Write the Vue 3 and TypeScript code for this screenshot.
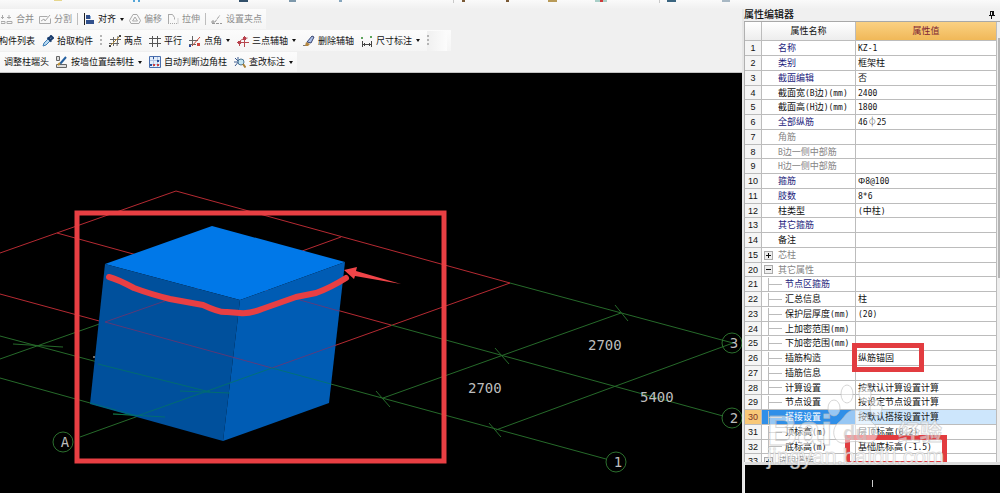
<script setup lang="ts">
interface Tool {
  label?: string
  icon?: string
  caret?: boolean
  disabled?: boolean
  sep?: 'line' | 'grip'
}
interface Row {
  no: number
  name: string
  value?: string
  tone?: 'blue' | 'grey'
  child?: boolean
  toggle?: '+' | '-'
  selected?: boolean
}

const bars: Tool[][] = [
  [
    { label: '合并', icon: 'merge', disabled: true },
    { label: '分割', icon: 'split', disabled: true },
    { sep: 'line' },
    { label: '对齐', icon: 'align', caret: true },
    { label: '偏移', icon: 'offset', disabled: true },
    { label: '拉伸', icon: 'stretch', disabled: true },
    { sep: 'line' },
    { label: '设置夹点', icon: 'grip', disabled: true },
  ],
  [
    { label: '构件列表' },
    { label: '拾取构件', icon: 'pick' },
    { sep: 'grip' },
    { label: '两点', icon: 'two' },
    { label: '平行', icon: 'parallel' },
    { label: '点角', icon: 'angle', caret: true },
    { label: '三点辅轴', icon: 'three', caret: true },
    { label: '删除辅轴', icon: 'erase' },
    { label: '尺寸标注', icon: 'dim', caret: true },
  ],
  [
    { label: '调整柱端头' },
    { label: '按墙位置绘制柱', icon: 'wall', caret: true },
    { label: '自动判断边角柱', icon: 'auto' },
    { label: '查改标注', icon: 'edit', caret: true },
  ],
]

const rows: Row[] = [
  { no: 1, name: '名称', value: 'KZ-1', tone: 'blue' },
  { no: 2, name: '类别', value: '框架柱', tone: 'blue' },
  { no: 3, name: '截面编辑', value: '否', tone: 'blue' },
  { no: 4, name: '截面宽(B边)(mm)', value: '2400' },
  { no: 5, name: '截面高(H边)(mm)', value: '1800' },
  { no: 6, name: '全部纵筋', value: '46⏀25', tone: 'blue' },
  { no: 7, name: '角筋', tone: 'grey' },
  { no: 8, name: 'B边一侧中部筋', tone: 'grey' },
  { no: 9, name: 'H边一侧中部筋', tone: 'grey' },
  { no: 10, name: '箍筋', value: 'Φ8@100', tone: 'blue' },
  { no: 11, name: '肢数', value: '8*6', tone: 'blue' },
  { no: 12, name: '柱类型', value: '(中柱)' },
  { no: 13, name: '其它箍筋', tone: 'blue' },
  { no: 14, name: '备注' },
  { no: 15, name: '芯柱', tone: 'grey', toggle: '+' },
  { no: 20, name: '其它属性', tone: 'grey', toggle: '-' },
  { no: 21, name: '节点区箍筋', tone: 'blue', child: true },
  { no: 22, name: '汇总信息', value: '柱', child: true },
  { no: 23, name: '保护层厚度(mm)', value: '(20)', child: true },
  { no: 24, name: '上加密范围(mm)', child: true },
  { no: 25, name: '下加密范围(mm)', child: true },
  { no: 26, name: '插筋构造', value: '纵筋锚固', child: true },
  { no: 27, name: '插筋信息', child: true },
  { no: 28, name: '计算设置', value: '按默认计算设置计算', child: true },
  { no: 29, name: '节点设置', value: '按设定节点设置计算', child: true },
  { no: 30, name: '搭接设置', value: '按默认搭接设置计算', child: true, selected: true },
  { no: 31, name: '顶标高(m)', value: '层顶标高(0.2)', child: true },
  { no: 32, name: '底标高(m)', value: '基础底标高(-1.5)', child: true },
  { no: 33, name: '锚固搭接', tone: 'grey', toggle: '+' },
]

// Splits a label into Latin and CJK runs, which are set at different sizes.
const runs = (s = ''): string[] => s.match(/[\x20-\x7e]+|[^\x20-\x7e]+/g) ?? []
const isLatin = (s: string): boolean => /^[\x20-\x7e]/.test(s)

const gridRed = [
  'M176 191L0 253', 'M176 191L510 283', 'M57 233L391 325', 'M0 294L272 368',
  'M510 283L272 368', 'M341 237L105 322',
]
const gridGreen = [
  'M510 283L733 343', 'M391 325L723 416', 'M272 368L606 459', 'M621 313L383 398',
  'M733 343L496 430', 'M272 368L80 437', 'M105 322L0 359', 'M0 336L210 392',
  'M0 378L137 416', 'M13 344L63 347', 'M180 391L230 393', 'M113 414L165 417',
  'M376 391L390 407', 'M495 348L509 364', 'M615 305L628 321', 'M489 423L501 437',
]
const axes = [
  { t: 'A', x: 63, y: 442 }, { t: '3', x: 732, y: 343 },
  { t: '2', x: 732, y: 418 }, { t: '1', x: 616, y: 462 },
]
const sizes = [
  { t: '2700', x: 588, y: 350 }, { t: '2700', x: 468, y: 393 }, { t: '5400', x: 640, y: 402 },
]
</script>

<template>
  <div class="app">
    <div class="cut-strip">
      <svg viewBox="0 0 1000 8" preserveAspectRatio="xMinYMin slice" aria-hidden="true">
        <path d="M54 0h8v1h-8z" fill="#e6d68c" />
        <path d="M133 0h2v2h-2zM138 0h2v2h-2z" fill="#55a6d8" />
        <path d="M239 0h9v2h-9z" fill="#32506a" />
        <path d="M289 0h7v2h-7z" fill="#7d98ab" />
        <path d="M339 0h3v2h-3z" fill="#86a6bd" />
        <path d="M453 0h1v3h-1zM659 0h1v3h-1z" fill="#c9c9c9" />
        <path d="M462 0h3v2h-3zM506 0h3v2h-3z" fill="#7a5a36" />
        <path d="M548 0h9v2h-9z" fill="#b89a58" />
        <path d="M595 0h12v2h-12z" fill="#a9cfc8" /><path d="M600 0h3v2h-3z" fill="#cc3b3b" />
        <path d="M667 0h9v2h-9z" fill="#3b6580" />
        <path d="M722 0h8v2h-8z" fill="#a8b8c4" />
      </svg>
    </div>
    <div class="main">
      <section class="work">
        <div class="bars">
          <div v-for="(bar, i) in bars" :key="i" class="bar" :class="'bar-' + i">
            <template v-for="(t, j) in bar" :key="j">
              <span v-if="t.sep" :class="t.sep"></span>
              <button v-else type="button" class="tool" :disabled="t.disabled">
                <svg v-if="t.icon" class="ico" viewBox="0 0 12 12" fill="none" aria-hidden="true">
                  <g v-if="t.icon === 'merge'" stroke="#aaa"><path d="M0 4.500h3M1.500 2v4M6 4.500h4M8 2v4M0 8.500h4v2h-4zM6 8.500h5v2h-5z" /></g>
                  <g v-else-if="t.icon === 'split'" stroke="#aaa"><path d="M.5 3.500h8M.5 3.500v7h11v-5M2 8l3-2 1 2 5-6" /></g>
                  <g v-else-if="t.icon === 'align'"><path d="M1.500 0v12" stroke="#222" /><path d="M3 2h4v4h-4zM3 7h8v4h-8z" fill="#31508c" /><path d="M7.500 3v3" stroke="#8fb0dc" /></g>
                  <g v-else-if="t.icon === 'offset'" stroke="#aaa"><path d="M4 1.500h4l3.500 6-1.500 3h-8l-1.500-3z" /><path d="M6 4l2.500 4h-5z" /></g>
                  <g v-else-if="t.icon === 'stretch'" stroke="#aaa"><path d="M1.500 1v10M1.500 1.500h4l2 3v2" /><path d="M3 10.500h8v-5" stroke-dasharray="1 1" /></g>
                  <g v-else-if="t.icon === 'grip'" stroke="#999"><path d="M4 9l5-7M1 10.500h10" stroke-dasharray="3 1" /><path d="M1 8h2v2h-2z" /></g>
                  <g v-else-if="t.icon === 'pick'"><path d="M1 11l1-3 4-4 2 2-4 4z" fill="#b7d9f2" stroke="#3c7cb4" /><path d="M5.500 2.500l4 4M7 3.500l2-2.500 2 2-2.500 2z" stroke="#173a6c" stroke-width="2" /></g>
                  <g v-else-if="t.icon === 'two'"><path d="M1 4.500h11M0 8.500h10M4.500 2v9M9 1l-1 10" stroke="#666" /><path d="M1 11l9-9" stroke="#b58b33" /><path d="M10 0h2v2h-2zM0 10h2v2h-2z" fill="#444" /></g>
                  <g v-else-if="t.icon === 'parallel'"><path d="M0 3.500h12M0 8.500h12M3.500 1v11M8.500 1v11" stroke="#555" /></g>
                  <g v-else-if="t.icon === 'angle'"><path d="M0 5.500h9M0 9.500h7M3.500 1v10" stroke="#666" /><path d="M3 11l8-9" stroke="#c5483a" /><path d="M8 8h3v3h-3z" fill="#cf4540" /><path d="M0 10h2v2h-2z" fill="#2b489c" /></g>
                  <g v-else-if="t.icon === 'three'"><path d="M2.500 11v-3q0-4 8-5M0 7.500h12M7.500 1v11" stroke="#b74850" /><path d="M1 6h3v3h-3zM6 2h3v3h-3z" fill="#b8404c" /></g>
                  <g v-else-if="t.icon === 'erase'"><path d="M0 10.500h4" stroke="#777" /><path d="M4 7l5-6 2 1-3 6z" fill="#a9bde6" stroke="#37446f" /><path d="M3 7l4 2-2 2h-3z" fill="#b28540" /></g>
                  <g v-else-if="t.icon === 'dim'"><path d="M1.500 6v6M10.500 6v6M1.500 9.500h9" stroke="#444" /><path d="M3 8h1v3h-1zM8 8h1v3h-1z" fill="#444" /><path d="M0 2h2v2h-2zM9 1h2v2h-2z" fill="#5da45c" /></g>
                  <g v-else-if="t.icon === 'wall'"><path d="M.5.5h3v4h-3zM.5 8.500h10v3h-10z" fill="#ddd" stroke="#666" /><path d="M4 8l6-7" stroke="#235fa0" stroke-width="2" /><path d="M2 9l2-2" stroke="#bf9030" stroke-width="2" /></g>
                  <g v-else-if="t.icon === 'auto'"><path d="M.5.5h11v11h-11z" fill="#e3edf9" stroke="#4a6fae" /><path d="M4.500 1v10M8.500 1v10M1 4.500h10M1 8.500h10" stroke="#b3c5e2" /><path d="M4 1h1v2h-1zM1 8h2v2h-2zM8 4h2v2h-2z" fill="#274e9a" /><path d="M4 8h2v2h-2zM8 8h2v2h-2z" fill="#cc3d3d" /></g>
                  <g v-else><path d="M1 2l3 3M1 10l5-6M4 1v4M0 6h4" stroke="#3d5c91" /><circle cx="7" cy="6" r="3" fill="#c5e5f1" stroke="#4b7695" /><path d="M9 8l2.500 3.500" stroke="#ab8235" stroke-width="2" /></g>
                </svg>
                <span>{{ t.label }}</span>
                <i v-if="t.caret" class="caret"></i>
              </button>
            </template>
            <span v-if="i === 1" class="stub"><span class="grip"></span></span>
          </div>
        </div>
        <svg class="scene" viewBox="0 73 742 420" preserveAspectRatio="xMinYMin meet" role="img" aria-label="三维视图">
          <g fill="none" stroke-width="1">
            <path :d="gridRed.join('')" stroke="#b52a32" />
            <path :d="gridGreen.join('')" stroke="#266a2a" />
          </g>
          <path d="M212 226L345 262L240 300L105 264z" fill="#0078e8" />
          <path d="M105 264L240 300L223 441L90 404z" fill="#00509c" />
          <path d="M240 300L345 262L329 403L223 441z" fill="#005cb4" />
          <g fill="none" stroke-width="1" opacity=".65">
            <path d="M105 322L165 301M105 322L272 368L336 345M300 300L339 311" stroke="#8b2c63" />
            <path d="M98 364L210 392M272 368L137 416M272 368L331 384M90 403L137 416M180 391L230 393M113 414L165 417" stroke="#007c5c" />
          </g>
          <path d="M94 356v2" stroke="#ddd" />
          <g fill="none" stroke="#2c702e">
            <circle v-for="a in axes" :key="a.t" :cx="a.x" :cy="a.y" r="10" />
          </g>
          <g class="cad">
            <text v-for="a in axes" :key="a.t" :x="a.x + 2" :y="a.y + 5" text-anchor="middle">{{ a.t }}</text>
            <text v-for="(s, i) in sizes" :key="i" :x="s.x" :y="s.y">{{ s.t }}</text>
          </g>
          <rect x="77" y="213" width="367" height="248" fill="none" stroke="#e83f43" stroke-width="5" />
          <path d="M109 277Q117 279 134 288Q150 294 170 299L203 305Q220 313 227 312L240 313Q250 314 262 309L296 297L316 293Q330 288 346 278" fill="none" stroke="#e83f43" stroke-width="6" stroke-linecap="round" stroke-linejoin="round" />
          <path d="M344 270L357 267L356 271L401 284L355 276L354 279z" fill="#f04448" />
        </svg>
      </section>

      <aside class="panel">
        <header class="title">
          <span>属性编辑器</span>
          <button type="button" class="pin" aria-label="固定">
            <svg viewBox="0 0 8 8" aria-hidden="true"><path d="M2 0h4v4h1v1h-3v3h-1v-3h-2v-1h1zM3 1v3h1v-3z" fill="#111" fill-rule="evenodd" /></svg>
          </button>
        </header>
        <div class="sheet">
          <table>
            <colgroup><col class="c-no" /><col class="c-name" /><col /></colgroup>
            <thead>
              <tr><th></th><th>属性名称</th><th class="hot">属性值</th></tr>
            </thead>
            <tbody>
              <tr v-for="r in rows" :key="r.no" :class="{ selected: r.selected }">
                <td class="no">{{ r.no }}</td>
                <td class="name" :class="[r.tone, { child: r.child }]">
                  <div class="cell">
                    <button v-if="r.toggle" type="button" class="toggle" :class="{ open: r.toggle === '-' }" :aria-label="r.name"></button>
                    <span v-else-if="r.child" class="branch"></span>
                    <span class="txt"><span v-for="(s, k) in runs(r.name)" :key="k" :class="{ latin: isLatin(s) }">{{ s }}</span></span>
                  </div>
                </td>
                <td class="value">
                  <div class="cell"><span><span v-for="(s, k) in runs(r.value)" :key="k" :class="{ latin: isLatin(s) }">{{ s }}</span></span></div>
                </td>
              </tr>
            </tbody>
          </table>
          <div class="mark mark-a"></div>
          <div class="mark mark-b"></div>
        </div>
        <div class="below"><span></span></div>
        <svg class="watermark" viewBox="0 0 190 92" aria-hidden="true">
          <g fill="#fff" fill-opacity=".5" stroke="#bbb" stroke-opacity=".6" stroke-width="1">
            <ellipse cx="70" cy="31" rx="6" ry="8" />
            <ellipse cx="83" cy="17" rx="6" ry="9" />
            <ellipse cx="101" cy="17" rx="6" ry="9" />
            <ellipse cx="112" cy="31" rx="6" ry="8" />
            <path d="M91 33C82 33 80 42 74 46C66 53 70 67 80 66C88 64 94 64 102 66C114 67 117 53 109 46C102 41 100 33 91 33z" />
            <text x="3" y="68" class="wm-big">Bai</text>
            <text x="134" y="63" class="wm-cjk">经验</text>
          </g>
          <text x="79" y="63" class="wm-du">du</text>
          <text x="3" y="87" class="wm-url">jingyan.baidu.com</text>
        </svg>
      </aside>
    </div>
  </div>
</template>

<style>
body {
  margin: 0;
}
</style>

<style scoped>
.app {
  display: flex;
  flex-direction: column;
  height: 100vh;
  overflow: hidden;
  background: #f0f0f0;
  color: #111;
  font-family: "Liberation Sans", "Noto Sans CJK SC", sans-serif;
  font-size: 9px;
  line-height: 12px;
}
button {
  margin: 0;
  padding: 0;
  border: 0;
  background: none;
  color: inherit;
  font: inherit;
}
.cut-strip {
  flex: none;
  height: 9px;
  background: linear-gradient(#fafafa, #f0f0f0);
}
.cut-strip svg {
  display: block;
  width: 100%;
  height: 8px;
}
.main {
  flex: 1;
  min-height: 0;
  display: grid;
  grid-template-columns: minmax(0, 1fr) 258px;
}
.work {
  display: flex;
  flex-direction: column;
  min-width: 0;
  min-height: 0;
}
.bars {
  flex: none;
  display: flex;
  flex-direction: column;
  align-items: flex-start;
  gap: 1px;
  border-bottom: 1px solid #c4c4c4;
}
.bar {
  display: flex;
  align-items: center;
  height: 20px;
  padding-right: 4px;
  background: linear-gradient(#fcfcfc, #f5f5f5);
  white-space: nowrap;
}
.bar-0 {
  gap: 5px;
  padding-left: 1px;
}
.bar-1 {
  gap: 7px;
  height: 21px;
}
.bar-1 .tool:first-child {
  margin-left: -1px;
}
.bar-2 {
  gap: 7px;
  padding-left: 4px;
}
.tool {
  display: flex;
  align-items: center;
  gap: 3px;
}
.tool:disabled {
  color: #8c8c8c;
}
.ico {
  width: 12px;
  height: 12px;
}
.caret {
  margin-left: 1px;
  border: 2px solid transparent;
  border-top: 3px solid #111;
  border-bottom: 0;
}
.line {
  width: 1px;
  height: 12px;
  background: #bdbdbd;
}
.grip {
  width: 2px;
  height: 12px;
  background: repeating-linear-gradient(#b5b5b5 0 2px, transparent 2px 4px);
}
.stub {
  display: flex;
  align-items: center;
  width: 20px;
  height: 20px;
  background: linear-gradient(90deg, #f0f0f0, #fcfcfc);
}
.scene {
  flex: 1;
  min-height: 0;
  display: block;
  width: 100%;
  background: #000;
}
.cad {
  fill: #bdbdbd;
  font-family: "DejaVu Sans Mono", monospace;
  font-size: 14px;
}
.panel {
  position: relative;
  display: flex;
  flex-direction: column;
  min-height: 0;
  border-left: 2px solid #e6e6e6;
}
.title {
  flex: none;
  display: flex;
  align-items: center;
  justify-content: space-between;
  height: 12px;
  padding-right: 4px;
  border-bottom: 1px solid #a8a8a8;
  font-size: 10px;
  font-weight: 500;
}
.pin,
.pin svg {
  display: block;
  width: 8px;
  height: 8px;
}
.sheet {
  position: relative;
  flex: 1;
  min-height: 0;
  overflow: hidden;
  padding-right: 3px;
  border-left: 1px solid #b0b0b0;
  background: linear-gradient(#b4b4b4, #b4b4b4) right 16px / 2px 240px no-repeat #eee;
  background-origin: border-box;
}
table {
  width: 100%;
  table-layout: fixed;
  border-collapse: separate;
  border-spacing: 0;
  background: #fff;
}
.c-no {
  width: 17px;
}
.c-name {
  width: 94px;
}
th,
td {
  box-sizing: border-box;
  padding: 0;
  border-right: 1px solid #bcbcbc;
  border-bottom: 1px solid #bcbcbc;
  overflow: hidden;
  white-space: nowrap;
}
th {
  height: 19px;
  background: linear-gradient(#fff, #ededed);
  font-weight: 400;
}
th.hot {
  background: linear-gradient(#fbd183, #f0b858);
  color: #7c2434;
}
td {
  height: 15px;
}
tbody tr:nth-child(4n) td {
  height: 14px;
}
.no {
  background: #f5f5f5;
  text-align: center;
}
.cell {
  display: flex;
  align-items: center;
  height: 13px;
}
.txt {
  margin-left: 16px;
}
.branch {
  align-self: stretch;
  width: 13px;
  margin-left: 6px;
  border-left: 1px solid #bbb;
  background: linear-gradient(#bbb, #bbb) 0 6px / 13px 1px no-repeat;
}
.branch + .txt {
  margin-left: 3px;
}
.toggle {
  width: 9px;
  height: 9px;
  margin-left: 2px;
  border: 1px solid #aaa;
  background:
    linear-gradient(#111, #111) center / 5px 1px no-repeat,
    linear-gradient(#111, #111) center / 1px 5px no-repeat,
    #eee;
}
.toggle.open {
  background: linear-gradient(#111, #111) center / 5px 1px no-repeat, #eee;
}
.toggle + .txt {
  margin-left: 5px;
}
.blue {
  color: #1c1c7c;
}
.grey {
  color: #858585;
}
.value {
  padding-left: 2px;
}
.latin {
  font-family: "DejaVu Sans Mono", monospace;
  font-size: 8px;
  line-height: 8px;
}
.selected .no {
  background: #f8c878;
  color: #7c3428;
}
.selected .name {
  background: #2f8fe8;
  color: #fff;
}
.selected .value {
  background: #cde6fc;
}
.mark {
  position: absolute;
  box-sizing: border-box;
  border: 5px solid #e23c40;
}
.mark-a {
  left: 107px;
  top: 321px;
  width: 72px;
  height: 29px;
}
.mark-b {
  left: 100px;
  top: 413px;
  width: 102px;
  height: 31px;
}
.below {
  flex: none;
  display: flex;
  justify-content: center;
  height: 28px;
  margin-left: 1px;
  border-top: 3px solid #dcdcdc;
  background: #000;
}
.below span {
  width: 1px;
  height: 7px;
  margin-top: 15px;
  background: #ccc;
}
.watermark {
  position: absolute;
  left: 20px;
  bottom: 24px;
  width: 190px;
  height: 92px;
  pointer-events: none;
}
.wm-big {
  font-size: 42px;
  font-weight: 700;
}
.wm-cjk {
  font-size: 22px;
  font-weight: 700;
}
.wm-du {
  fill: #c4c4c4;
  fill-opacity: .6;
  font-size: 20px;
  font-weight: 700;
}
.wm-url {
  fill: #fff;
  fill-opacity: .8;
  stroke: #aaa;
  stroke-opacity: .4;
  font-size: 22px;
}
</style>
